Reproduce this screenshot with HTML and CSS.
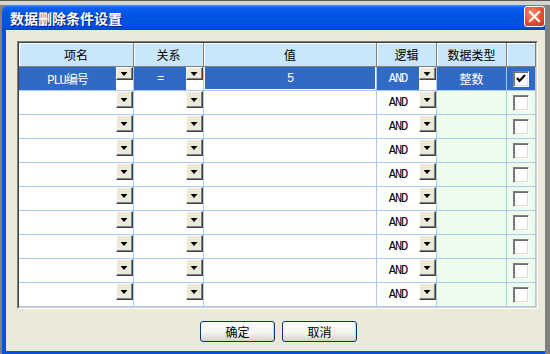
FILE: index.html
```html
<!DOCTYPE html>
<html lang="zh-CN">

<head>
	<meta charset="UTF-8">
	<title>数据删除条件设置</title>
	<link rel="stylesheet" href="styles.css">
</head>

<body>
	<div class="desk-top"></div>

	<div class="window">
		<div class="titlebar">
			<span class="title">数据删除条件设置</span>
			<div class="close">
				<svg width="13" height="13" viewBox="0 0 13 13">
					<path d="M2 2 L11 11 M11 2 L2 11" stroke="#fff" stroke-width="2.2" stroke-linecap="square" />
				</svg>
			</div>
		</div>

		<div class="client">
			<div class="grid-frame">
				<div class="grid">
					<div class="hcell">项名</div>
					<div class="hcell">关系</div>
					<div class="hcell hcell-val">值</div>
					<div class="hcell">逻辑</div>
					<div class="hcell">数据类型</div>
					<div class="hcell"></div>

					<div class="row sel">
						<div class="cell dd"><span class="val">PLU编号</span><span class="dd-col"><span class="dd-btn"></span></span></div>
						<div class="cell dd"><span class="val">=</span><span class="dd-col"><span class="dd-btn"></span></span></div>
						<div class="cell edit"><span class="val">5</span></div>
						<div class="cell dd"><span class="val">AND</span><span class="dd-col"><span class="dd-btn"></span></span></div>
						<div class="cell"><span class="val cjk">整数</span></div>
						<div class="cell chk-cell">
							<span class="chk">
								<svg width="14" height="14" viewBox="0 0 14 14">
									<path d="M3 6 L5.5 9 L11 3" stroke="#000" stroke-width="2" fill="none" />
								</svg>
							</span>
						</div>
					</div>

					<div class="row">
						<div class="cell dd"><span class="val"></span><span class="dd-col"><span class="dd-btn"></span></span></div>
						<div class="cell dd"><span class="val"></span><span class="dd-col"><span class="dd-btn"></span></span></div>
						<div class="cell"></div>
						<div class="cell dd"><span class="val">AND</span><span class="dd-col"><span class="dd-btn"></span></span></div>
						<div class="cell green"></div>
						<div class="cell green chk-cell"><span class="chk"></span></div>
					</div>
					<div class="row">
						<div class="cell dd"><span class="val"></span><span class="dd-col"><span class="dd-btn"></span></span></div>
						<div class="cell dd"><span class="val"></span><span class="dd-col"><span class="dd-btn"></span></span></div>
						<div class="cell"></div>
						<div class="cell dd"><span class="val">AND</span><span class="dd-col"><span class="dd-btn"></span></span></div>
						<div class="cell green"></div>
						<div class="cell green chk-cell"><span class="chk"></span></div>
					</div>
					<div class="row">
						<div class="cell dd"><span class="val"></span><span class="dd-col"><span class="dd-btn"></span></span></div>
						<div class="cell dd"><span class="val"></span><span class="dd-col"><span class="dd-btn"></span></span></div>
						<div class="cell"></div>
						<div class="cell dd"><span class="val">AND</span><span class="dd-col"><span class="dd-btn"></span></span></div>
						<div class="cell green"></div>
						<div class="cell green chk-cell"><span class="chk"></span></div>
					</div>
					<div class="row">
						<div class="cell dd"><span class="val"></span><span class="dd-col"><span class="dd-btn"></span></span></div>
						<div class="cell dd"><span class="val"></span><span class="dd-col"><span class="dd-btn"></span></span></div>
						<div class="cell"></div>
						<div class="cell dd"><span class="val">AND</span><span class="dd-col"><span class="dd-btn"></span></span></div>
						<div class="cell green"></div>
						<div class="cell green chk-cell"><span class="chk"></span></div>
					</div>
					<div class="row">
						<div class="cell dd"><span class="val"></span><span class="dd-col"><span class="dd-btn"></span></span></div>
						<div class="cell dd"><span class="val"></span><span class="dd-col"><span class="dd-btn"></span></span></div>
						<div class="cell"></div>
						<div class="cell dd"><span class="val">AND</span><span class="dd-col"><span class="dd-btn"></span></span></div>
						<div class="cell green"></div>
						<div class="cell green chk-cell"><span class="chk"></span></div>
					</div>
					<div class="row">
						<div class="cell dd"><span class="val"></span><span class="dd-col"><span class="dd-btn"></span></span></div>
						<div class="cell dd"><span class="val"></span><span class="dd-col"><span class="dd-btn"></span></span></div>
						<div class="cell"></div>
						<div class="cell dd"><span class="val">AND</span><span class="dd-col"><span class="dd-btn"></span></span></div>
						<div class="cell green"></div>
						<div class="cell green chk-cell"><span class="chk"></span></div>
					</div>
					<div class="row">
						<div class="cell dd"><span class="val"></span><span class="dd-col"><span class="dd-btn"></span></span></div>
						<div class="cell dd"><span class="val"></span><span class="dd-col"><span class="dd-btn"></span></span></div>
						<div class="cell"></div>
						<div class="cell dd"><span class="val">AND</span><span class="dd-col"><span class="dd-btn"></span></span></div>
						<div class="cell green"></div>
						<div class="cell green chk-cell"><span class="chk"></span></div>
					</div>
					<div class="row">
						<div class="cell dd"><span class="val"></span><span class="dd-col"><span class="dd-btn"></span></span></div>
						<div class="cell dd"><span class="val"></span><span class="dd-col"><span class="dd-btn"></span></span></div>
						<div class="cell"></div>
						<div class="cell dd"><span class="val">AND</span><span class="dd-col"><span class="dd-btn"></span></span></div>
						<div class="cell green"></div>
						<div class="cell green chk-cell"><span class="chk"></span></div>
					</div>
					<div class="row">
						<div class="cell dd"><span class="val"></span><span class="dd-col"><span class="dd-btn"></span></span></div>
						<div class="cell dd"><span class="val"></span><span class="dd-col"><span class="dd-btn"></span></span></div>
						<div class="cell"></div>
						<div class="cell dd"><span class="val">AND</span><span class="dd-col"><span class="dd-btn"></span></span></div>
						<div class="cell green"></div>
						<div class="cell green chk-cell"><span class="chk"></span></div>
					</div>
				</div>
			</div>

			<div class="actions">
				<button class="btn">确定</button>
				<button class="btn">取消</button>
			</div>
		</div>
	</div>
</body>

</html>
```

FILE: styles.css
```css
:root {
	--face: #ece9d8;
	--xp-blue: #0054e3;
	--sel: #316ac5;
	--line: #a9c9ed;
	--head: #c9e6fb;
	--green: #edfced;
}

* {
	margin: 0;
	padding: 0;
	box-sizing: border-box;
}

body {
	background-color: #808080;
	font-family: "Noto Sans CJK SC", sans-serif;
	font-size: 12px;
	color: #000;
	overflow: hidden;
}

.desk-top {
	height: 5px;
	background: linear-gradient(#5a5a5a 0 1px, #d6d3ce 1px);
}

.window {
	margin-left: 2px;
	width: 543px;
	height: 349px;
	display: flex;
	flex-direction: column;
}

.titlebar {
	height: 25px;
	padding-left: 8px;
	border-radius: 7px 7px 0 0;
	background: linear-gradient(#3d8cf6 0, #0a5ff0 3px, #0054e3 40%, #0052df 85%, #0043c8 100%);
	display: flex;
	justify-content: space-between;
	align-items: center;
}

.title {
	color: #fff;
	font-weight: bold;
	font-size: 14px;
	line-height: 1;
	text-shadow: 1px 1px #0a1f6e;
}

.close {
	align-self: flex-start;
	margin-top: 1px;
	width: 21px;
	height: 21px;
	border: 1px solid #fff;
	border-radius: 3px;
	background: radial-gradient(circle at 35% 30%, #f08a6c, #e0502f 55%, #c4381c);
	display: flex;
	align-items: center;
	justify-content: center;
}

.client {
	flex: 1;
	background-color: var(--face);
	border-left: 4px solid #0850e2;
	border-bottom: 3px solid #0850e2;
	padding: 11px 0 0 11px;
}

.grid-frame {
	width: 521px;
	border: 1px solid;
	border-color: #808080 #fff #fff #808080;
}

.grid {
	display: grid;
	grid-template-columns: 115px 70px 173px 60px 70px 29px;
	grid-template-rows: repeat(11, 24px);
	border: 1px solid;
	border-color: #404040 #d4d0c8 #d4d0c8 #404040;
}

.hcell {
	background-color: var(--head);
	border-right: 1px solid #808080;
	border-bottom: 1px solid #808080;
	box-shadow: inset 1px 1px #fff;
	display: flex;
	align-items: center;
	justify-content: center;
	font-size: 12px;
}

.row {
	display: contents;
}

.cell {
	background-color: #fff;
	border-right: 1px solid var(--line);
	border-bottom: 1px solid var(--line);
	display: flex;
	align-items: center;
	min-width: 0;
}

.cell.green {
	background-color: var(--green);
}

.val {
	flex: 1;
	height: 100%;
	display: flex;
	align-items: center;
	justify-content: center;
	font-family: "Liberation Mono", "Noto Sans CJK SC", monospace;
	font-size: 12px;
	letter-spacing: -1px;
	white-space: nowrap;
}

.val.cjk {
	font-family: "Noto Sans CJK SC", sans-serif;
	letter-spacing: 0;
}

.cell.dd {
	align-items: stretch;
}

.dd-col {
	width: 17px;
	background-color: #fff;
}

.dd-btn {
	display: flex;
	align-items: center;
	justify-content: center;
	height: 17px;
	background-color: var(--face);
	border: 1px solid;
	border-color: #fff #404040 #404040 #fff;
	box-shadow: inset -1px -1px #808080;
}

.dd-btn::after {
	content: "";
	width: 7px;
	height: 4px;
	margin: 1px 1px 0 0;
	background-color: #000;
	clip-path: polygon(0 0, 100% 0, 50% 100%);
}

.sel .cell {
	background-color: var(--sel);
	color: #fff;
}

.sel .dd-btn {
	height: 13px;
}

.sel .edit {
	box-shadow: inset 1px 0 #fff, inset -1px -1px #fff;
}

.chk-cell {
	align-items: flex-start;
	padding: 4px 0 0 6px;
}

.chk {
	width: 16px;
	height: 16px;
	background-color: #fff;
	border: 1px solid;
	border-color: #808080 #fff #fff #808080;
	box-shadow: inset 1px 1px #6f6f6f, inset -1px -1px #e2dfd2;
	display: flex;
	align-items: center;
	justify-content: center;
}

.actions {
	display: flex;
	gap: 7px;
	margin-top: 12px;
	padding-left: 183px;
}

.btn {
	width: 75px;
	height: 21px;
	border: 1px solid #003c74;
	border-radius: 3px;
	background: linear-gradient(#fff, #f5f4ef 55%, #d8d3c8);
	box-shadow: inset -1px -1px #d6d0c5;
	font-family: "Noto Sans CJK SC", sans-serif;
	font-size: 12px;
	color: #000;
	line-height: 1;
}
```
